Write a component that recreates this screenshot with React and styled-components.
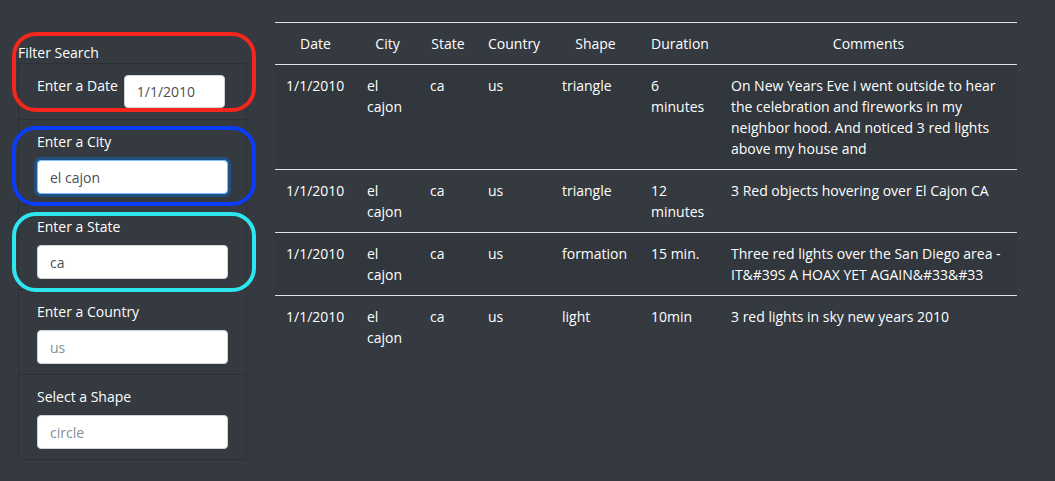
import React from "react";
import styled, { createGlobalStyle, css } from "styled-components";

const GlobalStyle = createGlobalStyle`
  html, body { margin: 0; padding: 0; }
  body {
    background: #343a40;
    color: #ffffff;
    font-family: "Open Sans", "Noto Sans", sans-serif;
    font-size: 14px;
    line-height: 21px;
  }
  * { box-sizing: border-box; }
`;

const Page = styled.div`
  display: flex;
  align-items: flex-start;
  gap: 28px;
  padding: 22px 0 0 18px;
  min-height: 481px;
`;

const Sidebar = styled.aside`
  position: relative;
  width: 229px;
  flex: none;
  padding-top: 20px;
`;

const SideTitle = styled.div`
  line-height: 21px;
  color: #ffffff;
`;

const Panel = styled.div`
  border: 1px solid rgba(0, 0, 0, 0.15);
  border-radius: 2px;
`;

const Item = styled.div`
  padding: ${(p) => (p.$inline ? "10px 18px 11px" : "11px 18px 10px")};
  border-top: ${(p) => (p.$first ? "none" : "1px solid rgba(0, 0, 0, 0.15)")};
  ${(p) =>
    p.$inline &&
    css`
      display: flex;
      align-items: flex-start;
      gap: 6px;
    `}
`;

const Label = styled.label`
  display: block;
  line-height: 21px;
  color: #ffffff;
  margin-bottom: ${(p) => (p.$inline ? "0" : "8px")};
  margin-top: ${(p) => (p.$inline ? "1px" : "0")};
  white-space: nowrap;
`;

const Input = styled.input`
  display: block;
  width: ${(p) => (p.$narrow ? "101px" : "100%")};
  height: ${(p) => (p.$narrow ? "33px" : "34px")};
  margin-top: ${(p) => (p.$narrow ? "1px" : "0")};
  padding: 0 12px;
  font-family: inherit;
  font-size: 14px;
  color: #495057;
  background: #ffffff;
  border: 1px solid #ced4da;
  border-radius: 4px;
  outline: none;
  &::placeholder { color: #868e96; }
  ${(p) =>
    p.$focused &&
    css`
      border-color: #80bdff;
      box-shadow: 0 0 0 3px rgba(0, 123, 255, 0.35);
    `}
`;

const Highlight = styled.div`
  position: absolute;
  left: -6px;
  width: 244px;
  height: 80px;
  top: ${(p) => p.$top}px;
  border: 4px solid ${(p) => p.$color};
  border-radius: 24px;
  pointer-events: none;
`;

const Table = styled.table`
  width: 742px;
  flex: none;
  table-layout: fixed;
  border-collapse: collapse;
  color: #ffffff;
  border-top: 1px solid #dee2e6;
`;

const Th = styled.th`
  padding: 10px 11px;
  font-weight: 500;
  text-align: center;
  line-height: 21px;
  border-bottom: 1px solid #dee2e6;
`;

const Row = styled.tr`
  background: ${(p) => (p.$striped ? "rgba(0, 0, 0, 0.05)" : "transparent")};
`;

const Td = styled.td`
  padding: 10px 11px;
  vertical-align: top;
  line-height: 21px;
  border-top: 1px solid #dee2e6;
`;

const columns = [
  { name: "Date", width: 81 },
  { name: "City", width: 63 },
  { name: "State", width: 58 },
  { name: "Country", width: 74 },
  { name: "Shape", width: 89 },
  { name: "Duration", width: 80 },
  { name: "Comments", width: 297 },
];

const rows = [
  ["1/1/2010", "el cajon", "ca", "us", "triangle", "6 minutes",
    "On New Years Eve I went outside to hear the celebration and fireworks in my neighbor hood. And noticed 3 red lights above my house and"],
  ["1/1/2010", "el cajon", "ca", "us", "triangle", "12 minutes",
    "3 Red objects hovering over El Cajon CA"],
  ["1/1/2010", "el cajon", "ca", "us", "formation", "15 min.",
    "Three red lights over the San Diego area - IT&#39S A HOAX YET AGAIN&#33&#33"],
  ["1/1/2010", "el cajon", "ca", "us", "light", "10min",
    "3 red lights in sky new years 2010"],
];

const fields = [
  { label: "Enter a City", value: "el cajon", focused: true },
  { label: "Enter a State", value: "ca" },
  { label: "Enter a Country", placeholder: "us" },
  { label: "Select a Shape", placeholder: "circle" },
];

export default function App() {
  return (
    <>
      <GlobalStyle />
      <Page>
        <Sidebar>
          <SideTitle>Filter Search</SideTitle>
          <Panel>
            <Item $inline $first>
              <Label $inline>Enter a Date</Label>
              <Input $narrow defaultValue="1/1/2010" />
            </Item>
            {fields.map((f) => (
              <Item key={f.label}>
                <Label>{f.label}</Label>
                <Input
                  $focused={f.focused}
                  defaultValue={f.value}
                  placeholder={f.placeholder}
                />
              </Item>
            ))}
          </Panel>
          <Highlight $top={10} $color="#f5261c" />
          <Highlight $top={104} $color="#0b3cf7" />
          <Highlight $top={190} $color="#2ee6f0" />
        </Sidebar>
        <Table>
          <colgroup>
            {columns.map((c) => (
              <col key={c.name} style={{ width: c.width }} />
            ))}
          </colgroup>
          <thead>
            <tr>
              {columns.map((c) => (
                <Th key={c.name}>{c.name}</Th>
              ))}
            </tr>
          </thead>
          <tbody>
            {rows.map((r, i) => (
              <Row key={i} $striped={i % 2 === 0}>
                {r.map((cell, j) => (
                  <Td key={j}>{cell}</Td>
                ))}
              </Row>
            ))}
          </tbody>
        </Table>
      </Page>
    </>
  );
}
